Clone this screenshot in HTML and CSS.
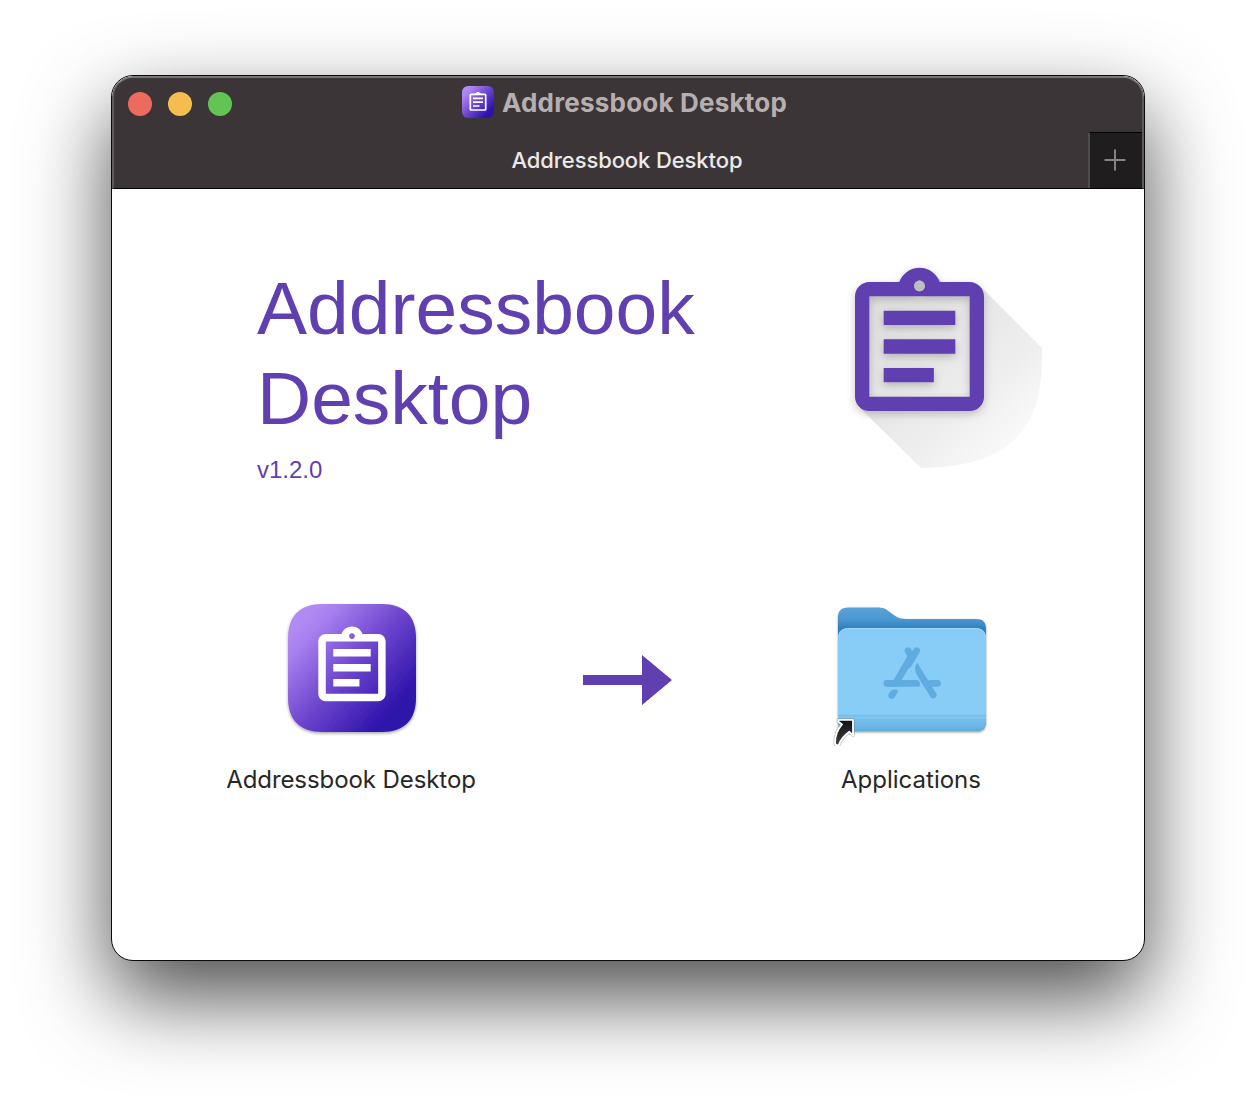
FILE: index.html
```html
<!DOCTYPE html>
<html lang="en">
<head>
<meta charset="utf-8">
<title>Addressbook Desktop</title>
<link rel="stylesheet" href="styles.css">
</head>
<body>
<svg width="0" height="0" class="defs" aria-hidden="true">
  <defs>
    <linearGradient id="app-fill" x1="0.08" y1="0.15" x2="0.86" y2="0.86">
      <stop offset="0" stop-color="#b18bf4"/>
      <stop offset="0.12" stop-color="#a880ef"/>
      <stop offset="0.5" stop-color="#6f47cf"/>
      <stop offset="0.95" stop-color="#2f14ac"/>
      <stop offset="1" stop-color="#2e13aa"/>
    </linearGradient>
    <path id="clipboard" fill-rule="evenodd" d="M19 3h-4.18C14.4 1.84 13.3 1 12 1s-2.4.84-2.82 2H5c-1.1 0-2 .9-2 2v14c0 1.1.9 2 2 2h14c1.1 0 2-.9 2-2V5c0-1.1-.9-2-2-2zM12 2.8a.75.75 0 1 1 0 1.5.75.75 0 0 1 0-1.5zM5 5h14v14H5zM7 7h10v2H7zM7 11h10v2H7zM7 15h7v2H7z"/>
  </defs>
</svg>
<main class="window">
  <header class="chrome">
    <div class="titlebar">
      <div class="lights"><i class="light red"></i><i class="light yellow"></i><i class="light green"></i></div>
      <div class="title">
        <svg class="title-icon" viewBox="0 0 32 32">
          <rect width="32" height="32" rx="6" fill="url(#app-fill)"/>
          <rect x="8.300" y="8.300" width="15.400" height="15.700" rx=".8" fill="none" stroke="#fff" stroke-width="1.700"/>
          <path d="M12.500 9V7.500h1.300c.4-2 4-2 4.400 0h1.300V9z" fill="#fff"/>
          <path d="M11 12.300h10M11 16.200h10M11 20h6.500" stroke="#fff" stroke-width="1.700"/>
        </svg>
        <span class="title-text">Addressbook Desktop</span>
      </div>
    </div>
    <div class="tabbar">
      <div class="tab">Addressbook Desktop</div>
      <div class="new-tab"><svg width="22" height="22" viewBox="0 0 22 22"><path d="M11 .5v21M.5 11h21" stroke="#858384" stroke-width="2"/></svg></div>
    </div>
  </header>
  <section class="hero">
    <div class="intro">
      <h1>Addressbook<br>Desktop</h1>
      <p>v1.2.0</p>
    </div>
    <svg class="logo" width="230" height="220" viewBox="0 0 230 220">
      <defs>
        <linearGradient id="long-shadow" gradientUnits="userSpaceOnUse" x1="60" y1="50" x2="185" y2="185">
          <stop offset="0" stop-color="#e0e0e0"/><stop offset="0.65" stop-color="#eeeeee"/><stop offset="1" stop-color="#fafafa"/>
        </linearGradient>
        <filter id="logo-shadow" x="-20%" y="-20%" width="140%" height="140%">
          <feDropShadow dx="0" dy="3" stdDeviation="4" flood-color="#000" flood-opacity="0.22"/>
        </filter>
      </defs>
      <path d="M101 13 109 22 147 26 209 88C210 143 201 207 88 208L27 148 30 30z" fill="url(#long-shadow)"/>
      <g filter="url(#logo-shadow)"><use href="#clipboard" transform="translate(.5 .5) scale(7.167)" fill="#603fb0"/></g>
      <circle cx="86.500" cy="25.900" r="5.300" fill="#bebebe"/>
    </svg>
  </section>
  <section class="install">
    <figure class="item">
      <svg width="156" height="156" viewBox="0 0 156 156">
        <defs><filter id="app-shadow" x="-10%" y="-10%" width="120%" height="125%"><feDropShadow dx="0" dy="1.5" stdDeviation="1.5" flood-opacity="0.35"/></filter></defs>
        <path d="M48 14h60c22 0 34 12 34 34v60c0 22-12 34-34 34H48c-22 0-34-12-34-34V48c0-22 12-34 34-34z" fill="url(#app-fill)" filter="url(#app-shadow)"/>
        <use href="#clipboard" transform="translate(33.1 32.8) scale(3.74)" fill="#fff"/>
      </svg>
      <figcaption>Addressbook Desktop</figcaption>
    </figure>
    <svg class="arrow" width="90" height="50" viewBox="0 0 90 50"><path d="M0 20h59V0l30 25-30 25V30H0z" fill="#603fb0"/></svg>
    <figure class="item">
      <svg width="164" height="156" viewBox="0 0 164 156">
        <defs>
          <linearGradient id="folder-back" x1="0" y1="0" x2="0" y2="1"><stop offset="0" stop-color="#58a2d6"/><stop offset="0.09" stop-color="#4c99d1"/><stop offset="0.17" stop-color="#2f80c3"/><stop offset="1" stop-color="#4294d0"/></linearGradient>
          <linearGradient id="folder-front" x1="0" y1="0" x2="0" y2="1"><stop offset="0" stop-color="#85cbf5"/><stop offset="0.1" stop-color="#88cdf7"/><stop offset="0.83" stop-color="#87cdf6"/><stop offset="0.86" stop-color="#7cc4ef"/><stop offset="0.88" stop-color="#7fc6f0"/><stop offset="0.91" stop-color="#72bbe8"/><stop offset="0.96" stop-color="#6db7e5"/><stop offset="1" stop-color="#5dabda"/></linearGradient>
          <filter id="folder-shadow" x="-10%" y="-10%" width="120%" height="120%"><feDropShadow dx="0" dy="1.3" stdDeviation="1.2" flood-opacity="0.4"/></filter>
          <linearGradient id="alias-fill" x1="0" y1="0" x2="0" y2="1"><stop offset="0" stop-color="#111"/><stop offset="1" stop-color="#414141"/></linearGradient>
        </defs>
        <g filter="url(#folder-shadow)">
          <path d="M8 28c0-7 3-10.500 10-10.500h31c11 0 13 11.500 27 11.500h70c7 0 10 3 10 10v92c0 7-3 10-10 10H18c-7 0-10-3-10-10z" fill="url(#folder-back)"/>
          <path d="M8 49c0-7 3-11 11-11h126c8 0 11 4 11 11v82c0 7-3 10-10 10H18c-7 0-10-3-10-10z" fill="url(#folder-front)"/>
        </g>
        <path d="M8.500 48c.5-6 3.500-9.500 10.500-9.500h126c7 0 10 3.500 10.500 9.500" fill="none" stroke="#a0dbfb"/>
        <path d="M8 125.500h148M8 129.500h148" stroke="#65b2e1" stroke-width=".7" opacity=".6"/>
        <g fill="none" stroke="#60ace0" stroke-width="6.800" stroke-linecap="round">
          <path d="M86.600 60.700 78.500 74.500M78 60.700l4.300 7.200M56.800 93.300h10M101 93.300h6.500M95 91.500l8.200 13.500"/>
        </g>
        <path d="M77.500 66h8.600L69.800 93h-8z" fill="#60ace0"/>
        <path d="M57 89.900h30c3 0 3.300 4 2.500 6.800H57z" fill="#60ace0"/>
        <path d="M87.500 73c-3 2.500-3.200 7-1 11l7.500 12.700h8z" fill="#60ace0"/>
        <path d="M60.500 101.200c2-2.200 5.500-2 8-.4l-3.700 6.200c-2.600 4.200-8.300.4-6.200-2.700z" fill="#60ace0"/>
        <g transform="translate(4 129)">
          <path d="M4.500.8H19v15.400l-3.700-3.400C11 16 7 20 5 25.500c-.7 1.500-4 .8-4-1.500C1 17 4 10 8 5.500L4.500 2.800z" fill="url(#alias-fill)" stroke="#666" stroke-opacity=".3" stroke-width="3.800" stroke-linejoin="round"/>
          <path d="M4.500.8H19v15.400l-3.700-3.400C11 16 7 20 5 25.500c-.7 1.500-4 .8-4-1.500C1 17 4 10 8 5.500L4.500 2.800z" fill="url(#alias-fill)" stroke="#fff" stroke-width="1.800" stroke-linejoin="round"/>
        </g>
      </svg>
      <figcaption class="applications">Applications</figcaption>
    </figure>
  </section>
</main>
</body>
</html>
```
FILE: styles.css
```css
* { box-sizing: border-box; }
body {
  margin: 0;
  height: 1108px;
  padding: 75px 111px;
  overflow: hidden;
  background: #fff;
  font-family: Inter, "Liberation Sans", sans-serif;
}
.defs { position: absolute; }
.window {
  width: 1034px;
  height: 886px;
  border: 1px solid #0a0a0a;
  border-radius: 22px;
  overflow: hidden;
  background: #fff;
  box-shadow: 0 36px 84px rgba(0, 0, 0, .7);
}
.chrome {
  height: 113px;
  border: 2px solid #5f5b5d;
  border-top-color: #777576;
  border-bottom: 1px solid #000;
  border-radius: 21px 21px 0 0;
  background: #3c3537;
}
.titlebar {
  display: grid;
  grid-template-columns: 1fr auto 1fr;
  align-items: center;
  height: 48px;
  padding: 0 14px;
}
.lights { display: flex; gap: 16px; padding-top: 4px; }
.light { width: 24px; height: 24px; border-radius: 50%; }
.red { background: #ed6a5e; }
.yellow { background: #f5bd4f; }
.green { background: #61c454; }
.title { display: flex; align-items: center; gap: 8px; margin-right: 7px; }
.title-icon { width: 32px; height: 32px; }
.title-text {
  padding-top: 2px;
  color: #b6afb1;
  font-size: 26px;
  font-weight: 700;
  letter-spacing: .2px;
  line-height: 32px;
  white-space: nowrap;
}
.tabbar { display: flex; height: 56px; margin-top: 6px; }
.tab {
  flex: 1;
  padding-left: 52px;
  color: #ebe9ea;
  font-size: 22px;
  font-weight: 500;
  letter-spacing: -.1px;
  line-height: 56px;
  text-align: center;
}
.new-tab {
  display: flex;
  align-items: center;
  justify-content: center;
  width: 54px;
  padding: 0 2px 1px 0;
  border-top: 1px solid #000;
  border-left: 2px solid #504b4d;
  background: #201d1f;
}
.hero { display: flex; justify-content: space-between; padding: 74px 81px 0 145px; height: 400px; }
h1 {
  margin: 0;
  color: #603fb0;
  font: 400 75px/90px "Liberation Sans", Arial, sans-serif;
}
.intro p {
  margin: 12px 0 0;
  color: #603fb0;
  font: 400 24px/30px "Liberation Sans", Arial, sans-serif;
}
.logo { margin-top: -3px; }
.install {
  display: grid;
  grid-template-columns: 300px 1fr 300px;
  padding: 1px 82px 0 90px;
}
.item { display: flex; flex-direction: column; align-items: center; margin: 0; }
.arrow { justify-self: center; margin: 65px 8px 0 0; }
figcaption {
  margin-top: 18px;
  padding-right: 2px;
  color: #272727;
  font-size: 24px;
  letter-spacing: -.08px;
  line-height: 32px;
  white-space: nowrap;
}
.applications { letter-spacing: 0; }
```
